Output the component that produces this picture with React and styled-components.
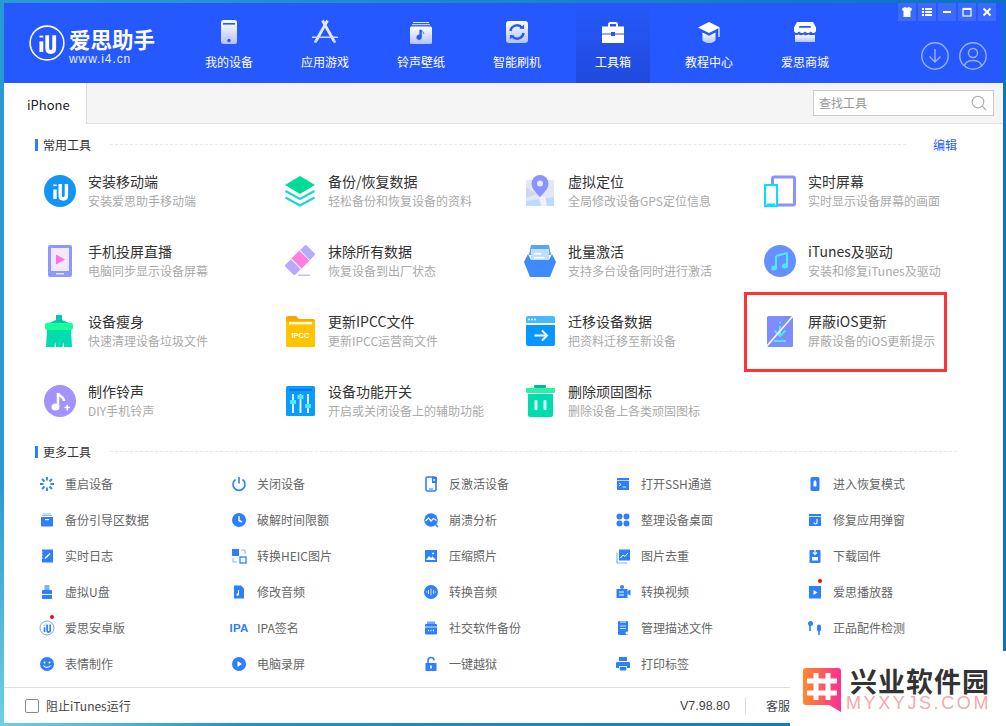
import React from 'react';
import styled, { createGlobalStyle } from 'styled-components';

const GlobalStyle = createGlobalStyle`
  html, body { margin: 0; padding: 0; background: #1b8fd0; }
  body { font-family: "Noto Sans CJK SC", "Liberation Sans", sans-serif; }
  * { box-sizing: border-box; }
`;

const BLUE = '#2d7ffb';

const Desktop = styled.div`
  position: relative;
  width: 1006px;
  height: 726px;
  overflow: hidden;
  padding: 3px 3px 3px 4px;
  background:
    radial-gradient(circle at 0 100%, #6fd0e2 0, rgba(111, 208, 226, 0) 240px),
    linear-gradient(90deg, #2a9bd2, #0d72c0);
`;

const Window = styled.div`
  height: 720px;
  display: flex;
  flex-direction: column;
  background: #fff;
`;

const Header = styled.header`
  position: relative;
  height: 80px;
  flex: none;
  display: flex;
  background: #2558ff;
`;

const Logo = styled.div`
  width: 178px;
  padding: 22px 0 0 25px;
  display: flex;
  gap: 4px;
`;

const LogoText = styled.div`
  margin-top: 3px;
  color: #fff;
  display: flex;
  flex-direction: column;
`;

const LogoTitle = styled.div`
  font-size: 21.5px;
  line-height: 22px;
  font-weight: 700;
  white-space: nowrap;
`;

const LogoUrl = styled.div`
  margin-top: 3px;
  font-family: "Liberation Sans", sans-serif;
  font-size: 12px;
  line-height: 13px;
  letter-spacing: 0.9px;
  opacity: 0.9;
`;

const Nav = styled.nav`
  display: flex;
  gap: 22px;
  padding-left: 10px;
`;

const NavItem = styled.div`
  width: 74px;
  height: 73px;
  margin-top: 7px;
  padding-top: 6px;
  display: flex;
  flex-direction: column;
  align-items: center;
  color: #fff;
  font-size: 12px;
  background: ${p => (p.$active ? 'linear-gradient(180deg, #2558f6, #2149dd)' : 'transparent')};
  span { margin-top: 5px; line-height: 18px; white-space: nowrap; }
`;

const WinButtons = styled.div`
  position: absolute;
  top: 0;
  right: 7px;
  display: flex;
  gap: 2px;
`;

const WinButton = styled.div`
  width: 18px;
  height: 18px;
  display: flex;
  align-items: center;
  justify-content: center;
  background: #3c6aff;
`;

const RoundButtons = styled.div`
  position: absolute;
  top: 39px;
  right: 16px;
  display: flex;
  gap: 10px;
`;

const TabBar = styled.div`
  height: 41px;
  flex: none;
  display: flex;
  justify-content: space-between;
  background: #f5f5f5;
  border-bottom: 1px solid #ddd;
`;

const Tab = styled.div`
  width: 83px;
  height: 41px;
  padding-left: 23px;
  background: #fff;
  border-right: 1px solid #ddd;
  font-size: 13px;
  line-height: 44px;
  color: #222;
`;

const Search = styled.div`
  width: 181px;
  height: 26px;
  margin: 7px 9px 0 0;
  padding: 0 6px 0 5px;
  display: flex;
  align-items: center;
  justify-content: space-between;
  background: #fff;
  border: 1px solid #ccc;
  font-size: 12px;
  color: #999;
`;

const SearchHint = styled.span`
  margin-top: -2px;
`;

const Main = styled.main`
  flex: 1;
  padding-top: 14px;
`;

const SectionHead = styled.div`
  height: 14px;
  padding: 0 46px 0 31px;
  display: flex;
  align-items: center;
  font-size: 12px;
  color: #333;
  &::before {
    content: '';
    width: 3px;
    height: 12px;
    margin-right: 5px;
    background: ${BLUE};
  }
`;

const HeadTitle = styled.span`
  margin-top: -2px;
`;

const HeadRule = styled.div`
  flex: 1;
  height: 0;
  margin: -2px 0 0 19px;
  border-top: 1px dashed #e8e8e8;
`;

const EditLink = styled.a`
  width: 51px;
  margin-top: -2px;
  text-align: right;
  font-size: 12px;
  color: #2a62f0;
`;

const ToolGrid = styled.div`
  margin-top: 23px;
  padding-left: 40px;
  display: grid;
  grid-template-columns: repeat(4, 240px);
  grid-auto-rows: 60px;
  row-gap: 10px;
`;

const Tool = styled.div`
  position: relative;
  display: flex;
  gap: 12px;
`;

const ToolIcon = styled.svg`
  width: 32px;
  height: 32px;
  flex: none;
`;

const ToolText = styled.div`
  margin-top: -3px;
`;

const ToolTitle = styled.div`
  font-size: 14px;
  line-height: 19px;
  color: #333;
  white-space: nowrap;
`;

const ToolDesc = styled.div`
  font-size: 12px;
  line-height: 19px;
  color: #aaa;
  white-space: nowrap;
`;

const Highlight = styled.div`
  position: absolute;
  left: -20px;
  top: -23px;
  width: 203px;
  height: 80px;
  border: 3px solid #f33;
`;

const MoreGrid = styled.div`
  margin-top: 7px;
  padding-left: 33px;
  display: grid;
  grid-template-columns: repeat(5, 192px);
  grid-auto-rows: 36px;
`;

const MoreItem = styled.div`
  display: flex;
  align-items: center;
  gap: 8px;
  font-size: 12px;
  color: #666;
  white-space: nowrap;
`;

const MoreLabel = styled.span`
  margin-top: -2px;
`;

const MoreIcon = styled.div`
  position: relative;
  width: 20px;
  height: 16px;
  display: flex;
  justify-content: center;
  svg { width: 16px; height: 16px; display: block; }
`;

const RedDot = styled.i`
  position: absolute;
  left: 13px;
  top: -5px;
  width: 4px;
  height: 4px;
  border-radius: 50%;
  background: #f00;
`;

const IpaMark = styled.b`
  font-family: "Liberation Sans", sans-serif;
  font-size: 11.5px;
  line-height: 16px;
  color: ${BLUE};
  letter-spacing: 0.2px;
`;

const Footer = styled.footer`
  height: 36px;
  flex: none;
  padding: 0 213px 0 21px;
  display: flex;
  align-items: center;
  border-top: 1px solid #ddd;
  font-size: 12px;
  color: #444;
`;

const Check = styled.div`
  width: 14px;
  height: 14px;
  margin-right: 7px;
  border: 1px solid #888;
  border-radius: 2px;
`;

const Version = styled.div`
  margin-left: auto;
  font-family: "Liberation Sans", sans-serif;
  font-size: 12.5px;
`;

const Sep = styled.div`
  width: 1px;
  height: 16px;
  margin: 0 20px 0 15px;
  background: #ddd;
`;

const Watermark = styled.div`
  position: absolute;
  right: 0;
  bottom: 0;
  width: 216px;
  height: 75px;
  padding: 17px 0 0 13px;
  display: flex;
  gap: 9px;
  background: #fff;
`;

const MarkText = styled.div`
  display: flex;
  flex-direction: column;
`;

const MarkTitle = styled.div`
  font-size: 27px;
  line-height: 26px;
  font-weight: 700;
  letter-spacing: 1px;
  color: #333;
  white-space: nowrap;
`;

const MarkUrl = styled.div`
  margin-left: -4px;
  font-family: "Liberation Sans", sans-serif;
  font-size: 18px;
  line-height: 18px;
  letter-spacing: 2.6px;
  color: #f4a9ae;
  white-space: nowrap;
`;

// i4 logo mark, shared by the header, the first tool and the android entry
const IU = ({ color }) => (
  <g fill="none" stroke={color} strokeWidth="3.4">
    <path d="M11 14.5V24" />
    <path d="M11 9.5v1.6" />
    <path d="M16.2 9v11.5c0 2.5 1.5 3.5 3.2 3.5s3-1 3-3.5V9" />
  </g>
);

const NavSvg = ({ children }) => (
  <svg width="32" height="32" viewBox="0 0 32 32">
    <defs>
      <linearGradient id="navFade" x1="0" y1="0" x2="0" y2="1">
        <stop offset="0" stopColor="#fff" />
        <stop offset="1" stopColor="#b4c3ff" />
      </linearGradient>
    </defs>
    {children}
  </svg>
);

const navIcons = {
  device: (
    <NavSvg>
      <rect x="8" y="4" width="16" height="24" rx="2.5" fill="url(#navFade)" />
      <rect x="10" y="7" width="12" height="1.6" fill="#2558ff" />
      <circle cx="16" cy="24.5" r="1.7" fill="#2558ff" />
    </NavSvg>
  ),
  apps: (
    <NavSvg>
      <path d="M13.500 4.500L25 25M18.500 4.500L7 25" stroke="#e4e9ff" strokeWidth="2.800" fill="none" />
      <path d="M3 20.500h26V22H3z" fill="#d5ddff" />
      <circle cx="6.500" cy="25.500" r="1.500" fill="#c4cfff" />
      <circle cx="25.500" cy="25.500" r="1.500" fill="#c4cfff" />
    </NavSvg>
  ),
  ring: (
    <NavSvg>
      <rect x="8" y="6" width="16" height="1" fill="#e6ebff" />
      <rect x="7" y="8.2" width="18" height="1" fill="#e6ebff" />
      <rect x="5" y="10.5" width="22" height="17.5" rx="1.5" fill="url(#navFade)" />
      <path d="M16.4 14v7.2a2.3 2.3 0 1 1-1.6-2.1V14z M16.4 14c.4 1.8 2.6 2 2.6 4" fill="#2558ff" stroke="#2558ff" strokeWidth="0.7" />
    </NavSvg>
  ),
  flash: (
    <NavSvg>
      <rect x="5" y="5" width="22" height="22" rx="3" fill="url(#navFade)" />
      <path d="M9.5 15a6.5 6.5 0 0 1 11.5-3.2M22.5 17a6.5 6.5 0 0 1-11.5 3.2" stroke="#2558ff" strokeWidth="2.4" fill="none" />
      <path d="M18.5 12.5l4.5.5.2-4.5zM13.5 19.5l-4.500-.5-.2 4.500z" fill="#2558ff" />
    </NavSvg>
  ),
  tools: (
    <NavSvg>
      <path d="M12 11V8.500A1.500 1.500 0 0 1 13.500 7h5A1.500 1.500 0 0 1 20 8.500V11" stroke="#fff" strokeWidth="2" fill="none" />
      <path d="M5 10.500h22v7H18v-1.500h-4v1.500H5z" fill="#fff" />
      <path d="M5 18.500h9V20h4v-1.500h9V27H5z" fill="#fff" />
      <rect x="14.800" y="16.500" width="2.400" height="3" fill="#2558ff" />
    </NavSvg>
  ),
  course: (
    <NavSvg>
      <path d="M16 6l11 5.500L16 17 5 11.500z" fill="#fff" />
      <path d="M9.500 16.500l6.500 3.200 6.500-3.200v8c-2 2-4 2.500-6.500 2.500s-4.500-.5-6.500-2.500z" fill="url(#navFade)" />
      <path d="M26 12v9" stroke="#dfe5ff" strokeWidth="1.400" />
    </NavSvg>
  ),
  shop: (
    <NavSvg>
      <path d="M8 6h16l3 5.500v3c0 1.500-1 2.500-2.500 2.500-1.300 0-2-.8-2.800-1.600-.9 1-2 1.600-3.300 1.600s-1.700-.6-2.400-1.400c-.7.800-1.500 1.400-2.500 1.400-1.400 0-2.400-.6-3.200-1.600C9 16.200 8.500 17 7.300 17 6 17 5 16 5 14.500v-3z" fill="#fff" />
      <rect x="10" y="10" width="12" height="1.800" rx="0.9" fill="#2558ff" />
      <path d="M6 18.800c1 .4 2.600.3 3.500-.3 1.600 1 3.600 1 5 0 1.400 1 3.400 1 5 0 1 .7 4.500.7 6.500.3V26H6z" fill="url(#navFade)" />
    </NavSvg>
  ),
};

const navItems = [
  ['我的设备', 'device'],
  ['应用游戏', 'apps'],
  ['铃声壁纸', 'ring'],
  ['智能刷机', 'flash'],
  ['工具箱', 'tools', true],
  ['教程中心', 'course'],
  ['爱思商城', 'shop'],
];

const toolIcons = {
  install: (
    <>
      <circle cx="16" cy="16" r="16" fill="#1296f5" />
      <IU color="#fff" />
    </>
  ),
  backup: (
    <>
      <path d="M16 1l15 9-15 9-15-9z" fill="#00dc96" />
      <path d="M1.500 16L16 24l14.500-8M1.500 22.500L16 30.500l14.500-8" stroke="#1ed8cf" strokeWidth="2.400" fill="none" />
    </>
  ),
  map: (
    <>
      <rect x="2" y="5" width="28" height="26" rx="1.500" fill="#e1e7f4" />
      <path d="M2 12l10 7-10 4z" fill="#d0d8e8" />
      <path d="M2 26l28-4v9H2z" fill="#b9dcff" />
      <path d="M15 22l6-1 2 10h-6z" fill="#eef3fb" />
      <path d="M16 0a8.500 8.500 0 0 1 8.500 8.500C24.500 14 18 20 16 22 14 20 7.500 14 7.500 8.500A8.500 8.500 0 0 1 16 0z" fill="#8a94ff" />
      <circle cx="16" cy="8.500" r="3" fill="#e8ebff" />
    </>
  ),
  screen: (
    <>
      <rect x="8.500" y="2" width="22" height="28" rx="1.500" fill="#fff" stroke="#8c92ff" strokeWidth="3" />
      <rect x="1" y="10" width="12" height="21" fill="#fff" stroke="#00e0ff" strokeWidth="2" />
      <rect x="3" y="28.500" width="8" height="1.500" fill="#00e0ff" />
    </>
  ),
  cast: (
    <>
      <rect x="4" y="0" width="24" height="32" rx="2" fill="#8c98ff" />
      <rect x="7" y="3" width="18" height="23" fill="#f1e9ff" />
      <path d="M12 9.500l9 5-9 5z" fill="#ff70e0" />
      <rect x="12" y="28" width="8" height="1.500" fill="#e6e8ff" />
    </>
  ),
  erase: (
    <>
      <g transform="rotate(45 16 15)">
        <rect x="9" y="0" width="14" height="30" rx="1.500" fill="#b9a8ff" />
        <rect x="9" y="8" width="14" height="1" fill="#fff" />
        <rect x="9" y="9" width="14" height="11" fill="#ff7de0" />
        <rect x="9" y="20" width="14" height="1" fill="#fff" />
      </g>
      <rect x="14" y="29.500" width="12" height="1.500" fill="#c9bcff" />
    </>
  ),
  activate: (
    <>
      <path d="M7 0h18l2 10H5z" fill="#55a6f8" />
      <rect x="7" y="4" width="18" height="15" fill="#bfe0ff" />
      <rect x="10" y="8" width="7" height="1.500" fill="#fff" />
      <rect x="10" y="12" width="11" height="1.500" fill="#fff" />
      <path d="M4 9l3 6h18l3-6 4 8-6 15H6L0 17z" fill="#3d8bff" />
    </>
  ),
  itunes: (
    <>
      <circle cx="16" cy="16" r="16" fill="#6690ff" />
      <path d="M12 11l11-3v13M12 11v12" stroke="#4de8f5" strokeWidth="2" fill="none" />
      <ellipse cx="10" cy="23" rx="3" ry="2.500" fill="#4de8f5" />
      <ellipse cx="21" cy="21" rx="3" ry="2.500" fill="#4de8f5" />
    </>
  ),
  clean: (
    <>
      <rect x="12" y="0" width="6" height="6" fill="#00c8aa" />
      <path d="M12 5h6l7 3H5z" fill="#00c8aa" />
      <rect x="1" y="8" width="28" height="7" rx="2" fill="#19ff9a" />
      <path d="M3 15h24l1 17h-8l-.7-5-.8 5H12l-.8-5-.7 5H2z" fill="#00dcb0" />
    </>
  ),
  ipcc: (
    <>
      <path d="M2 3a2 2 0 0 1 2-2h8l3 3h14a2 2 0 0 1 2 2v6H2z" fill="#ffa500" />
      <rect x="2" y="6" width="29" height="26" rx="1.500" fill="#ffc400" />
      <rect x="5" y="7" width="23" height="2.400" fill="#fff8e0" />
      <text x="16.500" y="23" textAnchor="middle" fontSize="7.500" fontWeight="700" fontFamily="Liberation Sans, sans-serif" fill="#fff">IPCC</text>
    </>
  ),
  migrate: (
    <>
      <path d="M2 3a2 2 0 0 1 2-2h25a2 2 0 0 1 2 2v5H2z" fill="#45baff" />
      <circle cx="5" cy="4.500" r="0.900" fill="#fff" />
      <circle cx="8" cy="4.500" r="0.900" fill="#fff" />
      <circle cx="11" cy="4.500" r="0.900" fill="#fff" />
      <path d="M2 10h29v19a2 2 0 0 1-2 2H4a2 2 0 0 1-2-2z" fill="#0a96ff" />
      <path d="M10.500 20.500h12M18 15.500l5 5-5 5" stroke="#fff" strokeWidth="2" fill="none" />
    </>
  ),
  block: (
    <>
      <rect x="3" y="1" width="26" height="31" rx="1.500" fill="#7f8cff" />
      <path d="M16 6.500v2M16 11v9" stroke="#4de8f5" strokeWidth="2" fill="none" />
      <path d="M10.500 15.500L16 21l5.500-5.500M10 26h12" stroke="#4de8f5" strokeWidth="2" fill="none" />
      <path d="M29 1L2 32" stroke="#fff" strokeWidth="1.600" />
    </>
  ),
  tone: (
    <>
      <circle cx="16" cy="16" r="16" fill="#a392ff" />
      <path d="M14 8v13.500" stroke="#fff" strokeWidth="2.500" fill="none" />
      <path d="M14 8c1 3.500 6 3.500 6 8" stroke="#fff" strokeWidth="2.500" fill="none" />
      <ellipse cx="11.500" cy="22" rx="4" ry="3.500" fill="#fff" />
      <path d="M20.500 22.500h5.500M23.250 20v5.500" stroke="#fff" strokeWidth="1.600" />
    </>
  ),
  switches: (
    <>
      <rect x="2" y="1" width="29" height="30" rx="1.500" fill="#0a9bff" />
      <rect x="5" y="4" width="23" height="1.600" fill="#0a6fe8" />
      <path d="M9 9v19M16.500 9v19M24 9v19" stroke="#fff" strokeWidth="1.800" />
      <rect x="6" y="15" width="6" height="4" fill="#4de8f5" />
      <rect x="13.500" y="10" width="6" height="4" fill="#4de8f5" />
      <rect x="21" y="19" width="6" height="4" fill="#4de8f5" />
    </>
  ),
  trash: (
    <>
      <rect x="10" y="0" width="12" height="3" rx="1" fill="#00b8a8" />
      <rect x="2" y="3" width="29" height="5" rx="1" fill="#2ef0a0" />
      <path d="M4 9h25v21a2 2 0 0 1-2 2H6a2 2 0 0 1-2-2z" fill="#00dcb0" />
      <rect x="10.500" y="15" width="3" height="10" rx="1" fill="#d8fff2" />
      <rect x="19.500" y="15" width="3" height="10" rx="1" fill="#d8fff2" />
    </>
  ),
};

const tools = [
  ['安装移动端', '安装爱思助手移动端', 'install'],
  ['备份/恢复数据', '轻松备份和恢复设备的资料', 'backup'],
  ['虚拟定位', '全局修改设备GPS定位信息', 'map'],
  ['实时屏幕', '实时显示设备屏幕的画面', 'screen'],
  ['手机投屏直播', '电脑同步显示设备屏幕', 'cast'],
  ['抹除所有数据', '恢复设备到出厂状态', 'erase'],
  ['批量激活', '支持多台设备同时进行激活', 'activate'],
  ['iTunes及驱动', '安装和修复iTunes及驱动', 'itunes'],
  ['设备瘦身', '快速清理设备垃圾文件', 'clean'],
  ['更新IPCC文件', '更新IPCC运营商文件', 'ipcc'],
  ['迁移设备数据', '把资料迁移至新设备', 'migrate'],
  ['屏蔽iOS更新', '屏蔽设备的iOS更新提示', 'block', true],
  ['制作铃声', 'DIY手机铃声', 'tone'],
  ['设备功能开关', '开启或关闭设备上的辅助功能', 'switches'],
  ['删除顽固图标', '删除设备上各类顽固图标', 'trash'],
];

const S = { fill: 'none', stroke: BLUE, strokeWidth: 1.6 };

const moreIcons = {
  restart: <path d="M8 1v3.500M8 11.500V15M1 8h3.500M11.500 8H15M3 3l2.500 2.500M10.500 10.500L13 13M3 13l2.500-2.500M10.500 5.500L13 3" {...S} strokeWidth="1.800" />,
  power: <path d="M4.500 3.500a6 6 0 1 0 7 0M8 1v6.500" {...S} />,
  unactivate: (
    <>
      <rect x="3" y="1" width="10" height="14" rx="1.500" {...S} />
      <path d="M9 1h5v6H9z" fill={BLUE} />
      <circle cx="11" cy="4" r="1" fill="#fff" />
      <rect x="6" y="12.500" width="4" height="1" fill={BLUE} />
    </>
  ),
  ssh: (
    <>
      <rect x="2" y="2" width="12" height="12" fill={BLUE} />
      <path d="M2 4.500h12" stroke="#fff" strokeWidth="0.700" />
      <path d="M4 7l2 1.500L4 10M7.500 11H11" stroke="#fff" strokeWidth="0.900" fill="none" />
    </>
  ),
  recover: (
    <>
      <rect x="3.500" y="1" width="9" height="14" rx="1.500" fill={BLUE} />
      <path d="M8 4l1.500 2v4.500h-3V6z" fill="#fff" />
    </>
  ),
  boot: (
    <>
      <rect x="4" y="1.500" width="8" height="1" fill="#8fbcff" />
      <rect x="3" y="3" width="10" height="1" fill="#8fbcff" />
      <path d="M2 5h12v8.500a1 1 0 0 1-1 1H3a1 1 0 0 1-1-1z" fill={BLUE} />
      <rect x="6" y="7" width="4" height="1.200" fill="#fff" />
    </>
  ),
  clock: (
    <>
      <circle cx="8" cy="8" r="7" fill={BLUE} />
      <path d="M8 4v4.500l3 1.500" stroke="#fff" strokeWidth="1.400" fill="none" />
    </>
  ),
  crash: (
    <>
      <circle cx="8" cy="8" r="6.800" fill={BLUE} />
      <path d="M2.500 9l3-3 2.500 3 2.500-2.500 3 2" stroke="#fff" strokeWidth="1.200" fill="none" />
      <path d="M12 12l3 3" {...S} />
    </>
  ),
  desktop: (
    <>
      <circle cx="4.500" cy="4.500" r="3" fill={BLUE} />
      <circle cx="11.500" cy="4.500" r="3" fill={BLUE} />
      <circle cx="4.500" cy="11.500" r="3" fill={BLUE} />
      <circle cx="11.500" cy="11.500" r="3" fill={BLUE} />
    </>
  ),
  popup: (
    <>
      <rect x="2" y="2" width="12" height="12" fill={BLUE} />
      <path d="M2 4.500h12" stroke="#fff" strokeWidth="0.800" />
      <path d="M10 7v3.500a1.500 1.500 0 0 1-3 0" stroke="#fff" strokeWidth="1.200" fill="none" />
    </>
  ),
  log: (
    <>
      <path d="M3 1.500h11v13H3z" fill={BLUE} />
      <path d="M6 10.500l5-5" stroke="#fff" strokeWidth="1.500" />
      <path d="M2 4h2M2 7h2M2 10h2" stroke="#fff" strokeWidth="0.800" />
    </>
  ),
  heic: (
    <>
      <rect x="1" y="1" width="7" height="7" fill={BLUE} />
      <rect x="9" y="9" width="6" height="6" {...S} strokeWidth="1.300" />
      <path d="M10 2h4v4M2 10v4h4" stroke="#8fbcff" strokeWidth="1.200" fill="none" />
    </>
  ),
  photo: (
    <>
      <rect x="2" y="2" width="12" height="12" fill={BLUE} />
      <path d="M3 12l3-4 2 2 1.500-1.500L13 12z" fill="#fff" />
      <circle cx="10" cy="5.500" r="1" fill="#fff" />
    </>
  ),
  dedupe: (
    <>
      <path d="M2 5v10h10" stroke="#7fb2ff" strokeWidth="1.200" fill="none" />
      <rect x="4" y="1.500" width="11" height="11" fill={BLUE} />
      <path d="M5.500 10l2.500-3 2 1.500 3-3.500" stroke="#fff" strokeWidth="1" fill="none" />
    </>
  ),
  firmware: (
    <>
      <rect x="2.500" y="2" width="11" height="13" rx="1" fill={BLUE} />
      <path d="M8 1v5M6 4.500L8 6.500l2-2" stroke="#fff" strokeWidth="1.200" fill="none" />
      <rect x="5" y="9" width="6" height="3.500" fill="#fff" />
    </>
  ),
  disk: (
    <>
      <rect x="5.500" y="1" width="5" height="5" fill="#7fb2ff" />
      <rect x="3" y="6" width="10" height="9" rx="1" fill={BLUE} />
      <rect x="3" y="10" width="10" height="1" fill="#fff" />
    </>
  ),
  audio: (
    <>
      <path d="M3 1.500h7l3 3v10H3z" fill={BLUE} />
      <path d="M8 6v4.500a1.300 1.300 0 1 1-1-1.200V6z" fill="#fff" />
    </>
  ),
  convAudio: (
    <>
      <circle cx="8" cy="8" r="7" fill={BLUE} />
      <path d="M3 8h1.500M5.500 6v4M8 4.500v7M10.500 6v4M11.500 8H13" stroke="#cfe0ff" strokeWidth="1" />
    </>
  ),
  video: (
    <>
      <path d="M1.500 5h11v9h-11z" fill={BLUE} />
      <path d="M12.500 7l3-1.500v6l-3-1.500z" fill={BLUE} />
      <circle cx="7" cy="3" r="2" fill={BLUE} />
      <path d="M4 8h5M9 11H4" stroke="#fff" strokeWidth="1" />
    </>
  ),
  player: (
    <>
      <rect x="2" y="2" width="12" height="12.500" fill={BLUE} />
      <path d="M6.500 6l4 2.500-4 2.500z" fill="#fff" />
    </>
  ),
  android: (
    <>
      <circle cx="8" cy="8" r="7" fill="none" stroke="#6ea6ff" strokeWidth="1" />
      <g transform="scale(0.5)"><IU color={BLUE} /></g>
    </>
  ),
  social: (
    <>
      <rect x="4" y="1.500" width="8" height="2.500" fill="#6ea6ff" />
      <rect x="2" y="4" width="12" height="10.500" rx="1" fill={BLUE} />
      <path d="M2 7h12" stroke="#fff" strokeWidth="0.800" />
      <path d="M5 10.500h1M7.500 10.500h1M10 10.500h1" stroke="#fff" strokeWidth="1.400" />
    </>
  ),
  profile: (
    <>
      <rect x="3" y="1" width="10" height="14" rx="1" fill={BLUE} />
      <rect x="5" y="1" width="6" height="2" fill="#8fbcff" />
      <path d="M5 6h6M5 8.500h6" stroke="#cfe0ff" strokeWidth="1" />
      <circle cx="12" cy="13" r="1.500" fill="#fff" />
    </>
  ),
  earphone: (
    <>
      <circle cx="3.500" cy="3.500" r="2.500" fill={BLUE} />
      <path d="M3 5v6" {...S} />
      <rect x="10" y="4.500" width="4" height="7" rx="2" fill={BLUE} />
      <path d="M12 11v4" {...S} />
    </>
  ),
  emoji: (
    <>
      <circle cx="8" cy="8" r="7" fill={BLUE} />
      <circle cx="5.500" cy="6.500" r="1" fill="#fff" />
      <circle cx="10.500" cy="6.500" r="1" fill="#fff" />
      <path d="M4.500 9.500c1.500 2.500 5.500 2.500 7 0" stroke="#fff" strokeWidth="1.200" fill="none" />
    </>
  ),
  record: (
    <>
      <circle cx="8" cy="8" r="7" fill={BLUE} />
      <path d="M6.500 5l4.500 3-4.500 3z" fill="#fff" />
    </>
  ),
  lock: (
    <>
      <path d="M5 7V4.500a3 3 0 0 1 6 0" {...S} />
      <rect x="2.500" y="7" width="11" height="8" fill={BLUE} />
      <rect x="7.200" y="9.500" width="1.600" height="3" fill="#fff" />
    </>
  ),
  printer: (
    <>
      <rect x="4" y="1" width="8" height="4" fill={BLUE} />
      <path d="M2 6h12a1.500 1.500 0 0 1 1 1.500V12h-3v-2H4v2H1V7.500A1.500 1.500 0 0 1 2 6z" fill={BLUE} />
      <rect x="4.800" y="10.800" width="6.400" height="3.700" fill={BLUE} />
    </>
  ),
};

const moreTools = [
  ['重启设备', 'restart'], ['关闭设备', 'power'], ['反激活设备', 'unactivate'], ['打开SSH通道', 'ssh'], ['进入恢复模式', 'recover'],
  ['备份引导区数据', 'boot'], ['破解时间限额', 'clock'], ['崩溃分析', 'crash'], ['整理设备桌面', 'desktop'], ['修复应用弹窗', 'popup'],
  ['实时日志', 'log'], ['转换HEIC图片', 'heic'], ['压缩照片', 'photo'], ['图片去重', 'dedupe'], ['下载固件', 'firmware'],
  ['虚拟U盘', 'disk'], ['修改音频', 'audio'], ['转换音频', 'convAudio'], ['转换视频', 'video'], ['爱思播放器', 'player', true],
  ['爱思安卓版', 'android', true], ['IPA签名', 'ipa'], ['社交软件备份', 'social'], ['管理描述文件', 'profile'], ['正品配件检测', 'earphone'],
  ['表情制作', 'emoji'], ['电脑录屏', 'record'], ['一键越狱', 'lock'], ['打印标签', 'printer'],
];

function App() {
  return (
    <Desktop>
      <GlobalStyle />
      <Window>
        <Header>
          <Logo>
            <svg width="36" height="36" viewBox="0 0 32 32" style={{ flex: 'none' }}>
              <circle cx="16" cy="16" r="15" fill="none" stroke="#fff" strokeWidth="1.400" />
              <IU color="#fff" />
            </svg>
            <LogoText>
              <LogoTitle>爱思助手</LogoTitle>
              <LogoUrl>www.i4.cn</LogoUrl>
            </LogoText>
          </Logo>
          <Nav>
            {navItems.map(([label, icon, active]) => (
              <NavItem key={label} $active={active}>
                {navIcons[icon]}
                <span>{label}</span>
              </NavItem>
            ))}
          </Nav>
          <WinButtons>
            <WinButton>
              <svg width="12" height="12" viewBox="0 0 12 12"><path d="M1 2.500L4 1c.8 1 3.200 1 4 0l3 1.500-.8 2.500-.7-.2V11h-7V4.800l-.7.200z" fill="#fff" /></svg>
            </WinButton>
            <WinButton>
              <svg width="12" height="12" viewBox="0 0 12 12"><path d="M1 2h2v2H1zM1 5h2v2H1zM1 8h2v2H1zM4 2h7v2H4zM4 5h7v2H4zM4 8h7v2H4z" fill="#fff" /></svg>
            </WinButton>
            <WinButton>
              <svg width="12" height="12" viewBox="0 0 12 12"><rect x="2" y="5" width="8" height="2" fill="#fff" /></svg>
            </WinButton>
            <WinButton>
              <svg width="12" height="12" viewBox="0 0 12 12"><rect x="2" y="2.500" width="8" height="7.500" fill="none" stroke="#fff" strokeWidth="1.200" /><rect x="2" y="2" width="8" height="2" fill="#fff" /></svg>
            </WinButton>
            <WinButton>
              <svg width="12" height="12" viewBox="0 0 12 12"><path d="M2.500 2.500l7 7M9.500 2.500l-7 7" stroke="#fff" strokeWidth="2" /></svg>
            </WinButton>
          </WinButtons>
          <RoundButtons>
            <svg width="28" height="28" viewBox="0 0 28 28" fill="none" stroke="#98b2ff" strokeWidth="1.400">
              <circle cx="14" cy="14" r="13.200" />
              <path d="M14 7v13M8.500 14.500L14 20l5.500-5.500" />
            </svg>
            <svg width="28" height="28" viewBox="0 0 28 28" fill="none" stroke="#98b2ff" strokeWidth="1.400">
              <circle cx="14" cy="14" r="13.200" />
              <circle cx="14" cy="11" r="4.500" />
              <path d="M5.500 23.500c1-3.500 4-5 8.500-5s7.500 1.500 8.500 5" />
            </svg>
          </RoundButtons>
        </Header>
        <TabBar>
          <Tab>iPhone</Tab>
          <Search>
            <SearchHint>查找工具</SearchHint>
            <svg width="16" height="16" viewBox="0 0 16 16" fill="none" stroke="#aaa" strokeWidth="1.100">
              <circle cx="7" cy="7" r="5.800" />
              <path d="M11.200 11.200L15 15" />
            </svg>
          </Search>
        </TabBar>
        <Main>
          <SectionHead>
            <HeadTitle>常用工具</HeadTitle>
            <HeadRule />
            <EditLink>编辑</EditLink>
          </SectionHead>
          <ToolGrid>
            {tools.map(([title, desc, icon, marked]) => (
              <Tool key={title}>
                <ToolIcon viewBox="0 0 32 32">{toolIcons[icon]}</ToolIcon>
                <ToolText>
                  <ToolTitle>{title}</ToolTitle>
                  <ToolDesc>{desc}</ToolDesc>
                </ToolText>
                {marked && <Highlight />}
              </Tool>
            ))}
          </ToolGrid>
          <SectionHead>
            <HeadTitle>更多工具</HeadTitle>
            <HeadRule />
          </SectionHead>
          <MoreGrid>
            {moreTools.map(([label, icon, dot]) => (
              <MoreItem key={label}>
                <MoreIcon>
                  {icon === 'ipa' ? <IpaMark>IPA</IpaMark> : <svg viewBox="0 0 16 16">{moreIcons[icon]}</svg>}
                  {dot && <RedDot />}
                </MoreIcon>
                <MoreLabel>{label}</MoreLabel>
              </MoreItem>
            ))}
          </MoreGrid>
        </Main>
        <Footer>
          <Check />
          阻止iTunes运行
          <Version>V7.98.80</Version>
          <Sep />
          客服
        </Footer>
      </Window>
      <Watermark>
        <svg width="38" height="44" viewBox="0 0 38 44" style={{ flex: 'none' }}>
          <defs>
            <linearGradient id="markFade" x1="0" y1="0" x2="1" y2="0">
              <stop offset="0" stopColor="#ff8a2a" />
              <stop offset="1" stopColor="#ff2e93" />
            </linearGradient>
          </defs>
          <path d="M3 0h32a3 3 0 0 1 3 3v41L26 37H3a3 3 0 0 1-3-3V3a3 3 0 0 1 3-3z" fill="url(#markFade)" />
          <path d="M13 5v27M25 5v27M4 13h30M4 25h30" stroke="#fff" strokeWidth="5" />
        </svg>
        <MarkText>
          <MarkTitle>兴业软件园</MarkTitle>
          <MarkUrl>MYXYJS.COM</MarkUrl>
        </MarkText>
      </Watermark>
    </Desktop>
  );
}

export default App;
